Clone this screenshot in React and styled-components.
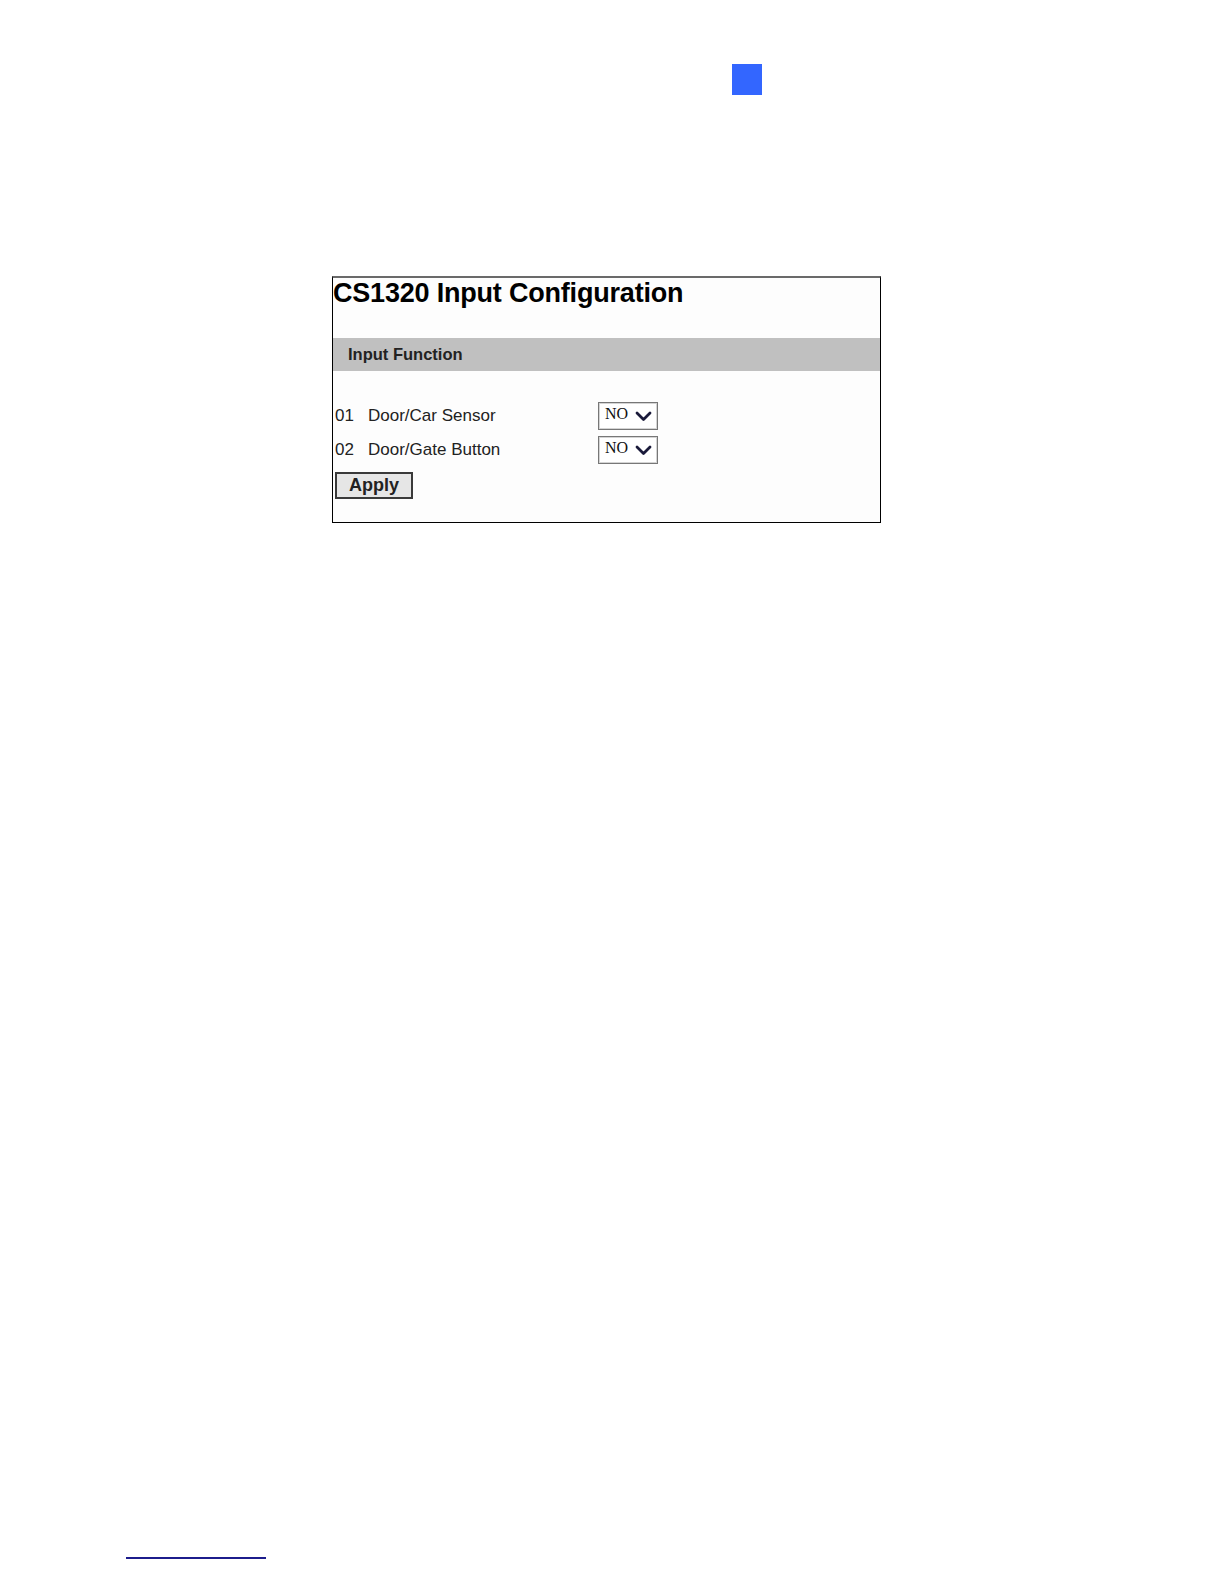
import React from 'react';
import styled, { createGlobalStyle } from 'styled-components';

const GlobalStyle = createGlobalStyle`
    html, body {
        margin: 0;
        padding: 0;
        background: #ffffff;
    }
    body {
        font-family: "Liberation Sans", Arial, sans-serif;
        color: #000;
    }
`;

const Page = styled.div`
    width: 1224px;
    height: 1584px;
    display: flex;
    flex-direction: column;
    box-sizing: border-box;
`;

const Marker = styled.div`
    width: 30px;
    height: 31px;
    margin: 64px 0 0 732px;
    background: #3366ff;
`;

const Panel = styled.div`
    width: 549px;
    height: 247px;
    margin: 181px 0 0 332px;
    box-sizing: border-box;
    border: 1px solid #000;
    border-top: 2px solid #6a6a6a;
    background: #fdfdfd;
    display: flex;
    flex-direction: column;
`;

const Title = styled.h1`
    margin: 0;
    font-size: 27px;
    line-height: 31px;
    font-weight: bold;
    letter-spacing: -0.2px;
`;

const SectionBar = styled.div`
    margin-top: 29px;
    height: 33px;
    background: #c0c0c0;
    display: flex;
    align-items: center;
    padding-left: 15px;
    font-size: 16.5px;
    font-weight: bold;
    color: #222;
`;

const Rows = styled.div`
    margin-top: 31px;
    display: flex;
    flex-direction: column;
    gap: 7px;
`;

const Row = styled.div`
    display: grid;
    grid-template-columns: 33px 230px auto;
    align-items: center;
    height: 27px;
    padding-left: 2px;
    font-size: 17px;
    color: #222;
`;

const SelectBox = styled.div`
    width: 60px;
    height: 28px;
    box-sizing: border-box;
    border: 1px solid #777;
    box-shadow: inset 0 0 0 1px #d4d4d4;
    background: #fff;
    display: flex;
    align-items: center;
    justify-content: space-between;
    padding: 0 5px 0 6px;
    font-family: "Liberation Serif", "DejaVu Serif", serif;
    font-size: 16px;
    color: #111;
    span {
        margin-top: -4px;
    }
`;

const ApplyButton = styled.button`
    margin: 9px 0 0 2px;
    width: 78px;
    height: 27px;
    box-sizing: border-box;
    border: 2px solid #3a3a3a;
    background: #e6e6e6;
    font-family: "Liberation Sans", Arial, sans-serif;
    font-size: 18px;
    font-weight: bold;
    color: #222;
    padding: 0;
    align-self: flex-start;
    cursor: pointer;
`;

const FooterRule = styled.div`
    margin: auto 0 25px 126px;
    width: 140px;
    height: 2px;
    background: #1c1c8c;
`;

const Chevron = () => (
    <svg width="17" height="11" viewBox="0 0 17 11">
        <path d="M2 2 L8.5 8.5 L15 2" fill="none" stroke="#1a1a3a" strokeWidth="2.8" strokeLinecap="round" strokeLinejoin="round" />
    </svg>
);

const inputs = [
    { num: '01', name: 'Door/Car Sensor', value: 'NO' },
    { num: '02', name: 'Door/Gate Button', value: 'NO' },
];

const App = () => (
    <>
        <GlobalStyle />
        <Page>
            <Marker />
            <Panel>
                <Title>CS1320 Input Configuration</Title>
                <SectionBar>Input Function</SectionBar>
                <Rows>
                    {inputs.map((item) => (
                        <Row key={item.num}>
                            <span>{item.num}</span>
                            <span>{item.name}</span>
                            <SelectBox>
                                <span>{item.value}</span>
                                <Chevron />
                            </SelectBox>
                        </Row>
                    ))}
                </Rows>
                <ApplyButton>Apply</ApplyButton>
            </Panel>
            <FooterRule />
        </Page>
    </>
);

export default App;
